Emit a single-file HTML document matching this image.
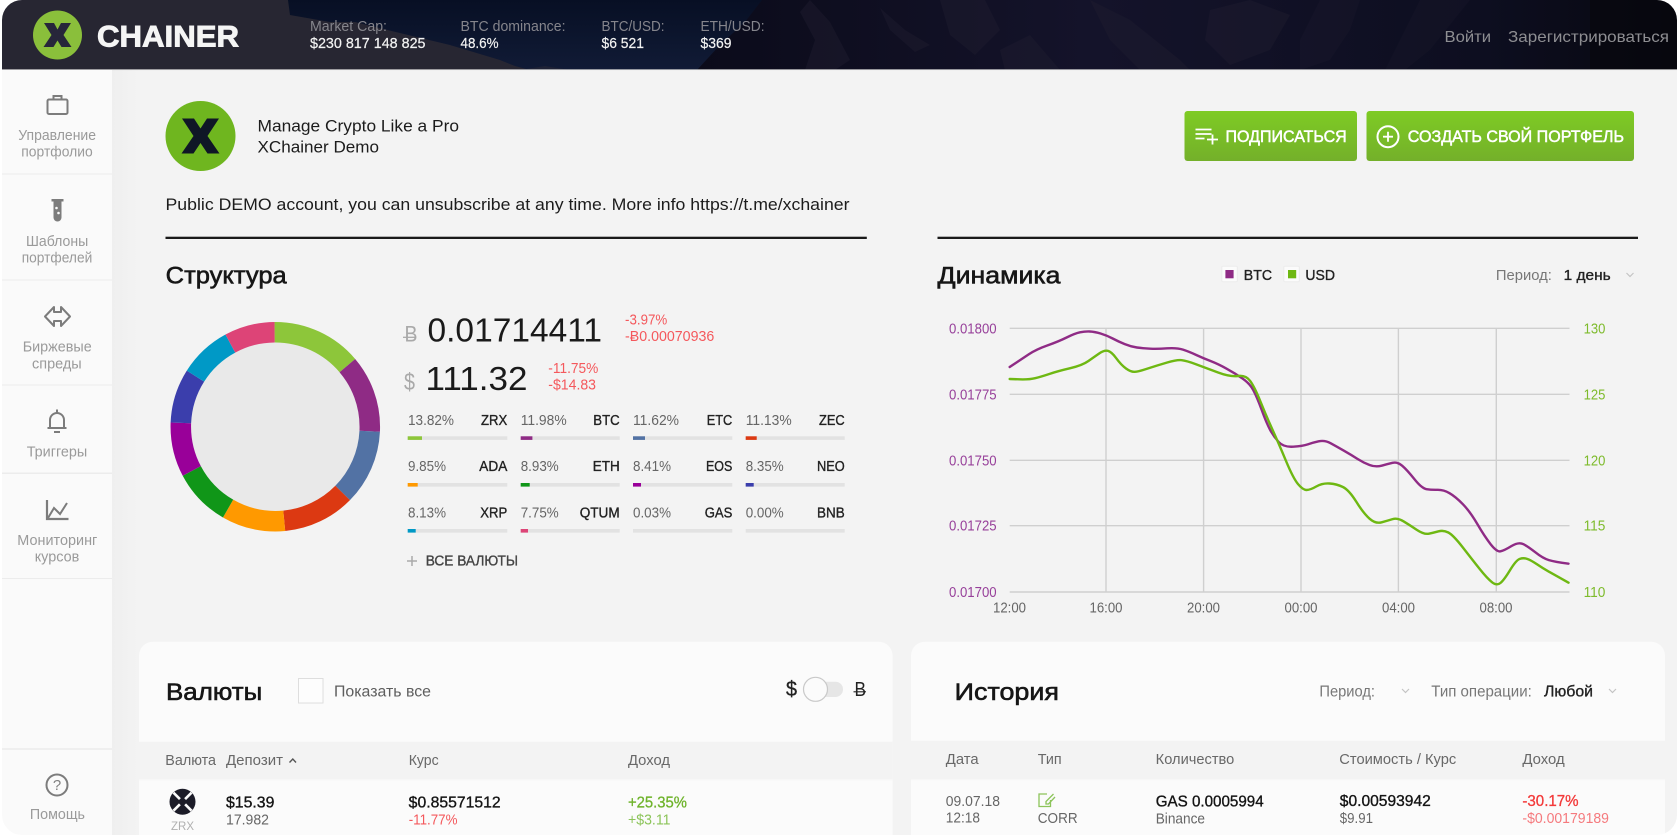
<!DOCTYPE html>
<html lang="ru">
<head>
<meta charset="utf-8">
<title>XChainer Demo</title>
<style>
html,body{margin:0;padding:0;background:#fff;width:1680px;height:835px;overflow:hidden}
svg{display:block}
text{font-family:"Liberation Sans","DejaVu Sans",sans-serif;font-size:14.5px;white-space:pre}
.w{fill:#f2f2f2;stroke:#f2f2f2;stroke-width:.2}
.hl{fill:#85858c}
.nav{fill:#9a9a9a}
.d{fill:#1c1c1c}
.m{fill:#222;stroke:#222;stroke-width:.35}
.g{fill:#777}
.g2{fill:#666}
.r{fill:#f4585c}
.h{font-size:24.5px;fill:#161616;stroke:#161616;stroke-width:.6}
.p{fill:#97409a}
.u{fill:#7ebb2c}
.t{fill:#686868;font-size:14.5px}
</style>
</head>
<body>
<svg width="1680" height="835" viewBox="0 0 1680 835" xmlns="http://www.w3.org/2000/svg">
<defs>
<linearGradient id="btn" x1="0" y1="0" x2="0" y2="1"><stop offset="0" stop-color="#7ecb24"/><stop offset="1" stop-color="#74b02a"/></linearGradient>
<linearGradient id="nv" x1="0" y1="0" x2="0" y2="1"><stop offset="0" stop-color="#070f24"/><stop offset="1" stop-color="#111b36"/></linearGradient>
<linearGradient id="mt" x1="0" y1="0" x2="1" y2="0"><stop offset="0" stop-color="#0b0b1a"/><stop offset=".4" stop-color="#14132a"/><stop offset=".8" stop-color="#0d0e20"/><stop offset="1" stop-color="#08080f"/></linearGradient>
<linearGradient id="sd" x1="0" y1="0" x2="1" y2="0"><stop offset="0" stop-color="#efefef"/><stop offset="1" stop-color="#f3f3f3"/></linearGradient>
</defs>

<!-- page -->
<rect width="1680" height="835" fill="#f3f3f3"/>
<rect x="112" y="70" width="26" height="765" fill="url(#sd)"/>

<!-- header -->
<rect x="0" y="0" width="1680" height="70" fill="url(#nv)"/>
<path d="M0 0H288L290 15L330 22L355 22L400 33L450 45L500 60L515 66L530 70H0Z" fill="#272632"/>
<path d="M520 70L545 66L570 70Z" fill="#1e2236"/>
<path d="M697 70L720 45L745 22L762 0H1680V70Z" fill="url(#mt)"/>
<g fill="#201e30" opacity=".45">
<path d="M810 0L830 22L850 60L835 70L805 70L815 40L800 12Z"/>
<path d="M880 8L905 30L930 45L915 52L890 30Z"/>
<path d="M940 0L985 0L1000 30L975 55L950 35Z"/>
<path d="M1000 50L1030 35L1060 70H1005Z"/>
<path d="M1090 0L1130 20L1180 60L1190 70H1140L1110 40Z"/>
<path d="M1210 10L1250 0L1290 15L1270 50L1230 65L1205 40Z"/>
<path d="M1320 0L1360 0L1350 30L1330 60L1300 70L1300 40Z" opacity=".6"/>
<path d="M1420 0L1470 0L1450 25L1430 50L1405 70L1385 70Z" opacity=".5"/>
</g>
<rect x="1590" y="0" width="90" height="70" fill="#07070e" opacity=".7"/>
<rect x="0" y="69.3" width="1680" height=".8" fill="#d0d0d0"/>

<circle cx="57.5" cy="35" r="24.5" fill="#8abf3b"/>
<path d="M44 23H54L57.5 29.5L61 23H71L63.5 35L71.5 47H61.500L57.5 40.500L53.500 47H43.5L51.500 35Z" fill="#27263a"/>
<text x="97" y="46.7" textLength="142" lengthAdjust="spacingAndGlyphs" style="font-size:30px;font-weight:700;stroke:#f5f5f5;stroke-width:.9" fill="#f5f5f5">CHAINER</text>

<text class="hl" x="310" y="31" textLength="77" lengthAdjust="spacingAndGlyphs">Market Cap:</text>
<text class="w" x="310" y="48" textLength="115.500" lengthAdjust="spacingAndGlyphs">$230 817 148 825</text>
<text class="hl" x="460.500" y="31" textLength="105" lengthAdjust="spacingAndGlyphs">BTC dominance:</text>
<text class="w" x="460.500" y="48" textLength="38" lengthAdjust="spacingAndGlyphs">48.6%</text>
<text class="hl" x="601.500" y="31" textLength="63" lengthAdjust="spacingAndGlyphs">BTC/USD:</text>
<text class="w" x="601.500" y="48" textLength="42.500" lengthAdjust="spacingAndGlyphs">$6 521</text>
<text class="hl" x="700.500" y="31" textLength="64" lengthAdjust="spacingAndGlyphs">ETH/USD:</text>
<text class="w" x="700.500" y="48" textLength="31" lengthAdjust="spacingAndGlyphs">$369</text>
<text x="1444.500" y="42" textLength="46.500" lengthAdjust="spacingAndGlyphs" style="font-size:16px" fill="#8e8e92">Войти</text>
<text x="1508" y="42" textLength="161" lengthAdjust="spacingAndGlyphs" style="font-size:16px" fill="#8e8e92">Зарегистрироваться</text>

<!-- sidebar -->
<rect x="0" y="70" width="112" height="765" fill="#fafafa"/>
<g fill="#ececec">
<rect x="2" y="173.500" width="110" height="1"/>
<rect x="2" y="279.500" width="110" height="1"/>
<rect x="2" y="384.500" width="110" height="1"/>
<rect x="2" y="472.500" width="110" height="1.500"/>
<rect x="2" y="578" width="110" height="1"/>
<rect x="2" y="748.500" width="110" height="1" fill="#e4e4e4"/>
</g>
<g fill="none" stroke="#7c7c7c" stroke-width="2">
<rect x="47.500" y="99.500" width="20" height="14.500" rx="1.500"/>
<path d="M53.500 99V96H61.500V99"/>
<path d="M54 307L45 316.500L54 326V321H61V326L70 316.500L61 307V312H54Z" stroke-linejoin="round"/>
<path d="M50 427V420A7 7 0 0 1 64 420V427M47.500 428H66.500M57 409.500V413M54 432H60"/>
<path d="M47 500V519H68.500" stroke-width="2.200"/>
<path d="M48 518L54 508L60 514L67 503"/>
<circle cx="57" cy="785" r="10.500"/>
</g>
<path d="M51.500 199H63.500V201.500H61.500V217.500A4 4 0 0 1 53.500 217.500V201.500H51.500Z" fill="#7c7c7c"/>
<circle cx="56.500" cy="208" r="1.300" fill="#fafafa"/><circle cx="58.500" cy="213" r="1.300" fill="#fafafa"/>
<text x="57" y="790" text-anchor="middle" style="font-size:15px" fill="#808080">?</text>
<text class="nav" x="18.300" y="140" textLength="77.700" lengthAdjust="spacingAndGlyphs">Управление</text>
<text class="nav" x="21.300" y="156.700" textLength="71.400" lengthAdjust="spacingAndGlyphs">портфолио</text>
<text class="nav" x="26" y="246" textLength="62.300" lengthAdjust="spacingAndGlyphs">Шаблоны</text>
<text class="nav" x="21.700" y="262.700" textLength="70.600" lengthAdjust="spacingAndGlyphs">портфелей</text>
<text class="nav" x="22.700" y="351.700" textLength="69" lengthAdjust="spacingAndGlyphs">Биржевые</text>
<text class="nav" x="32" y="368.300" textLength="49.700" lengthAdjust="spacingAndGlyphs">спреды</text>
<text class="nav" x="26.700" y="456.700" textLength="60.600" lengthAdjust="spacingAndGlyphs">Триггеры</text>
<text class="nav" x="17.300" y="545" textLength="80" lengthAdjust="spacingAndGlyphs">Мониторинг</text>
<text class="nav" x="34.700" y="561.700" textLength="44.600" lengthAdjust="spacingAndGlyphs">курсов</text>
<text class="nav" x="29.900" y="819" textLength="55.100" lengthAdjust="spacingAndGlyphs">Помощь</text>

<!-- profile -->
<circle cx="200.500" cy="136" r="35" fill="#6fb61f"/>
<path d="M182 118.500H194L200.500 128.500L207 118.500H219L207.500 136L219.500 153.500H207.500L200.500 143L193.500 153.500H181.500L193.500 136Z" fill="#0f1626"/>
<text class="d" x="257.500" y="131.500" textLength="201.500" lengthAdjust="spacingAndGlyphs" style="font-size:16.5px">Manage Crypto Like a Pro</text>
<text class="d" x="257.500" y="152.300" textLength="121.500" lengthAdjust="spacingAndGlyphs" style="font-size:16.5px">XChainer Demo</text>
<text class="d" x="165.500" y="210" textLength="684" lengthAdjust="spacingAndGlyphs" style="font-size:16.5px">Public DEMO account, you can unsubscribe at any time. More info https://t.me/xchainer</text>

<rect x="1184.500" y="111" width="172.500" height="50" rx="3" fill="url(#btn)"/>
<rect x="1366.500" y="111" width="267.500" height="50" rx="3" fill="url(#btn)"/>
<g stroke="#fff" stroke-width="1.800" fill="none">
<path d="M1195.500 129.500H1211.500M1195.500 134H1211.500M1195.500 138.500H1204.500M1207 139.500H1218M1212.500 134.500V144.500"/>
<circle cx="1388" cy="136.700" r="10.500" stroke-width="2"/>
<path d="M1383 136.700H1393M1388 131.700V141.700"/>
</g>
<text x="1225.500" y="142" textLength="121.200" lengthAdjust="spacingAndGlyphs" style="font-size:16.5px;stroke:#fff;stroke-width:.5" fill="#fff">ПОДПИСАТЬСЯ</text>
<text x="1407.800" y="142" textLength="216.200" lengthAdjust="spacingAndGlyphs" style="font-size:16.5px;stroke:#fff;stroke-width:.5" fill="#fff">СОЗДАТЬ СВОЙ ПОРТФЕЛЬ</text>

<rect x="165.500" y="236.700" width="701.300" height="2.300" fill="#1a1a1a"/>
<rect x="937.500" y="236.700" width="700.500" height="2.300" fill="#1a1a1a"/>

<!-- structure -->
<text class="h" x="165.700" y="283.300" textLength="121" lengthAdjust="spacingAndGlyphs">Структура</text>
<circle cx="275.300" cy="426.700" r="84.500" fill="#e9e9e9"/>
<g transform="rotate(-90 275.300 426.700)" fill="none" stroke-width="20.500">
<circle cx="275.300" cy="426.700" r="94.500" pathLength="100" stroke="#8dc63a" stroke-dasharray="13.82 86.18" stroke-dashoffset="0"/>
<circle cx="275.300" cy="426.700" r="94.500" pathLength="100" stroke="#8f2b85" stroke-dasharray="11.98 88.02" stroke-dashoffset="-13.82"/>
<circle cx="275.300" cy="426.700" r="94.500" pathLength="100" stroke="#5272a4" stroke-dasharray="11.62 88.38" stroke-dashoffset="-25.80"/>
<circle cx="275.300" cy="426.700" r="94.500" pathLength="100" stroke="#dc3912" stroke-dasharray="11.13 88.87" stroke-dashoffset="-37.42"/>
<circle cx="275.300" cy="426.700" r="94.500" pathLength="100" stroke="#ff9900" stroke-dasharray="9.85 90.15" stroke-dashoffset="-48.55"/>
<circle cx="275.300" cy="426.700" r="94.500" pathLength="100" stroke="#109618" stroke-dasharray="8.93 91.07" stroke-dashoffset="-58.40"/>
<circle cx="275.300" cy="426.700" r="94.500" pathLength="100" stroke="#990099" stroke-dasharray="8.41 91.59" stroke-dashoffset="-67.33"/>
<circle cx="275.300" cy="426.700" r="94.500" pathLength="100" stroke="#3b3eac" stroke-dasharray="8.35 91.65" stroke-dashoffset="-75.74"/>
<circle cx="275.300" cy="426.700" r="94.500" pathLength="100" stroke="#0099c6" stroke-dasharray="8.13 91.87" stroke-dashoffset="-84.09"/>
<circle cx="275.300" cy="426.700" r="94.500" pathLength="100" stroke="#dd4477" stroke-dasharray="7.78 92.22" stroke-dashoffset="-92.22"/>
</g>

<text x="404.500" y="341.700" textLength="13" lengthAdjust="spacingAndGlyphs" style="font-size:22px" fill="#a9a9a9">B</text>
<path d="M403 337.300H416" stroke="#a9a9a9" stroke-width="1.300"/>
<text x="427.500" y="341.700" textLength="174.500" lengthAdjust="spacingAndGlyphs" style="font-size:33px" fill="#1a1a1a">0.01714411</text>
<text class="r" x="625" y="324.300" textLength="42.300" lengthAdjust="spacingAndGlyphs">-3.97%</text>
<text class="r" x="625" y="341" textLength="89.300" lengthAdjust="spacingAndGlyphs">-Ƀ0.00070936</text>
<text x="404" y="390" textLength="11" lengthAdjust="spacingAndGlyphs" style="font-size:24px" fill="#a9a9a9">$</text>
<text x="425.500" y="390" textLength="102" lengthAdjust="spacingAndGlyphs" style="font-size:33px" fill="#1a1a1a">111.32</text>
<text class="r" x="548.300" y="373" textLength="50" lengthAdjust="spacingAndGlyphs">-11.75%</text>
<text class="r" x="548.300" y="389.700" textLength="47.700" lengthAdjust="spacingAndGlyphs">-$14.83</text>

<!-- bars -->
<g fill="#e2e2e2">
<rect x="407.700" y="436.300" width="99.600" height="3.600"/><rect x="520.700" y="436.300" width="99" height="3.600"/><rect x="633" y="436.300" width="99.300" height="3.600"/><rect x="745.700" y="436.300" width="99" height="3.600"/>
<rect x="407.700" y="483" width="99.600" height="3.600"/><rect x="520.700" y="483" width="99" height="3.600"/><rect x="633" y="483" width="99.300" height="3.600"/><rect x="745.700" y="483" width="99" height="3.600"/>
<rect x="407.700" y="529" width="99.600" height="3.600"/><rect x="520.700" y="529" width="99" height="3.600"/><rect x="633" y="529" width="99.300" height="3.600"/><rect x="745.700" y="529" width="99" height="3.600"/>
</g>
<rect x="407.700" y="436.300" width="14.300" height="3.600" fill="#8dc63a"/>
<rect x="520.700" y="436.300" width="11.700" height="3.600" fill="#8f2b85"/>
<rect x="633" y="436.300" width="12" height="3.600" fill="#5272a4"/>
<rect x="745.700" y="436.300" width="11" height="3.600" fill="#dc3912"/>
<rect x="407.700" y="483" width="10" height="3.600" fill="#ff9900"/>
<rect x="520.700" y="483" width="9" height="3.600" fill="#109618"/>
<rect x="633" y="483" width="8" height="3.600" fill="#990099"/>
<rect x="745.700" y="483" width="8" height="3.600" fill="#3b3eac"/>
<rect x="407.700" y="529" width="8" height="3.600" fill="#0099c6"/>
<rect x="520.700" y="529" width="7.300" height="3.600" fill="#dd4477"/>

<g>
<text class="g2" x="408" y="425" textLength="46" lengthAdjust="spacingAndGlyphs">13.82%</text>
<text class="m" x="481" y="425" textLength="26.300" lengthAdjust="spacingAndGlyphs">ZRX</text>
<text class="g2" x="520.700" y="425" textLength="46" lengthAdjust="spacingAndGlyphs">11.98%</text>
<text class="m" x="593.300" y="425" textLength="26.400" lengthAdjust="spacingAndGlyphs">BTC</text>
<text class="g2" x="633" y="425" textLength="46" lengthAdjust="spacingAndGlyphs">11.62%</text>
<text class="m" x="706.700" y="425" textLength="25.600" lengthAdjust="spacingAndGlyphs">ETC</text>
<text class="g2" x="745.700" y="425" textLength="46" lengthAdjust="spacingAndGlyphs">11.13%</text>
<text class="m" x="819" y="425" textLength="25.700" lengthAdjust="spacingAndGlyphs">ZEC</text>

<text class="g2" x="408" y="471" textLength="38" lengthAdjust="spacingAndGlyphs">9.85%</text>
<text class="m" x="479.300" y="471" textLength="28" lengthAdjust="spacingAndGlyphs">ADA</text>
<text class="g2" x="520.700" y="471" textLength="38" lengthAdjust="spacingAndGlyphs">8.93%</text>
<text class="m" x="592.700" y="471" textLength="27" lengthAdjust="spacingAndGlyphs">ETH</text>
<text class="g2" x="633" y="471" textLength="38" lengthAdjust="spacingAndGlyphs">8.41%</text>
<text class="m" x="706" y="471" textLength="26.300" lengthAdjust="spacingAndGlyphs">EOS</text>
<text class="g2" x="745.700" y="471" textLength="38" lengthAdjust="spacingAndGlyphs">8.35%</text>
<text class="m" x="817" y="471" textLength="27.700" lengthAdjust="spacingAndGlyphs">NEO</text>

<text class="g2" x="408" y="517.700" textLength="38" lengthAdjust="spacingAndGlyphs">8.13%</text>
<text class="m" x="480.300" y="517.700" textLength="27" lengthAdjust="spacingAndGlyphs">XRP</text>
<text class="g2" x="520.700" y="517.700" textLength="38" lengthAdjust="spacingAndGlyphs">7.75%</text>
<text class="m" x="579.700" y="517.700" textLength="40" lengthAdjust="spacingAndGlyphs">QTUM</text>
<text class="g2" x="633" y="517.700" textLength="38" lengthAdjust="spacingAndGlyphs">0.03%</text>
<text class="m" x="704.700" y="517.700" textLength="27.600" lengthAdjust="spacingAndGlyphs">GAS</text>
<text class="g2" x="745.700" y="517.700" textLength="38" lengthAdjust="spacingAndGlyphs">0.00%</text>
<text class="m" x="817" y="517.700" textLength="27.700" lengthAdjust="spacingAndGlyphs">BNB</text>
</g>
<path d="M407 561H417M412 556V566" stroke="#aaa" stroke-width="1.500" fill="none"/>
<text x="425.700" y="565.700" textLength="92.300" lengthAdjust="spacingAndGlyphs" style="stroke:#444;stroke-width:.35" fill="#444">ВСЕ ВАЛЮТЫ</text>

<!-- dynamics -->
<text class="h" x="937.500" y="283.300" textLength="123" lengthAdjust="spacingAndGlyphs">Динамика</text>
<rect x="1221.800" y="266.300" width="15.500" height="15.500" rx="1" fill="#fbfbfb" stroke="#ececec"/>
<rect x="1225.400" y="270" width="8.200" height="8.300" fill="#8f2b85"/>
<text class="m" x="1243.800" y="280" textLength="28.200" lengthAdjust="spacingAndGlyphs">BTC</text>
<rect x="1283.800" y="266.300" width="15.500" height="15.500" rx="1" fill="#fbfbfb" stroke="#ececec"/>
<rect x="1288" y="270" width="8.200" height="8.300" fill="#6eb812"/>
<text class="m" x="1305.400" y="280" textLength="29.600" lengthAdjust="spacingAndGlyphs">USD</text>
<text class="g" x="1495.900" y="280" textLength="56" lengthAdjust="spacingAndGlyphs">Период:</text>
<text class="m" x="1563.700" y="280" textLength="47" lengthAdjust="spacingAndGlyphs">1 день</text>
<path d="M1626.500 273L1630 276.500L1633.500 273" fill="none" stroke="#c4c4c4" stroke-width="1.200"/>

<g stroke="#cfcfcf" stroke-width="1.400" fill="none">
<path d="M1009.700 328.300H1569.500M1009.700 394.300H1569.500M1009.700 460.300H1569.500M1009.700 525.700H1569.500M1009.700 592H1569.500"/>
<path d="M1106 328.300V592M1203.600 328.300V592M1301 328.300V592M1398.400 328.300V592M1496.300 328.300V592"/>
</g>
<g transform="translate(920 240) scale(.4847 .33333)" fill="none" stroke-width="2.400" stroke-linecap="round" stroke-linejoin="round">
<path vector-effect="non-scaling-stroke" stroke="#8f2b85" d="M185 381L197.500 369Q210 357 225 342.500Q240 328 262.500 316.500Q285 305 302.500 292.500Q320 280 330 277Q340 274 350 274.500Q360 275 372.500 280.500Q385 286 397.500 295.500Q410 305 422.500 312.500Q435 320 447.500 322.500Q460 325 475 326Q490 327 510 325Q530 323 542.500 329Q555 335 570 345Q585 355 600 363.500Q615 372 632.500 386Q650 400 665 415Q680 430 687.500 450Q695 470 705 510Q715 550 722.500 570Q730 590 740 606Q750 622 770 620Q790 618 800 613Q810 608 822.500 604Q835 600 847.500 610Q860 620 875 632.500Q890 645 902.500 656.500Q915 668 927.500 675Q940 682 952.500 677Q965 672 975 668.500Q985 665 995 677.500Q1005 690 1020 717.500Q1035 745 1045 747.500Q1055 750 1067.500 749.500Q1080 749 1092.500 759.500Q1105 770 1120 792.500Q1135 815 1150 852.500Q1165 890 1177.500 913Q1190 936 1197.500 934Q1205 932 1220 918.500Q1235 905 1245 912.500Q1255 920 1270 937.500Q1285 955 1297.500 960.500Q1310 966 1338 971"/>
<path vector-effect="non-scaling-stroke" stroke="#6eb812" d="M185 417L205 418Q225 419 237.500 414.500Q250 410 267.500 401.500Q285 393 310 384.500Q335 376 347.500 363Q360 350 370 340Q380 330 387.500 332.500Q395 335 405 355Q415 375 425 385.500Q435 396 442.500 395.500Q450 395 470 385.500Q490 376 510 367.500Q530 359 540 360.500Q550 362 570 373Q590 384 615 397.500Q640 411 656 408Q672 405 681 422.500Q690 440 702.500 485Q715 530 727.500 570Q740 610 755 662.500Q770 715 780 732.500Q790 750 797.500 750Q805 750 817.500 739.500Q830 729 845 730.500Q860 732 872.500 741Q885 750 900 785Q915 820 927.500 836Q940 852 952.500 847Q965 842 975 837.500Q985 833 997.500 844Q1010 855 1025 869.500Q1040 884 1050 881Q1060 878 1070 874Q1080 870 1090 877.500Q1100 885 1120 922.500Q1140 960 1155 987.500Q1170 1015 1180 1026.500Q1190 1038 1197.500 1029Q1205 1020 1217.500 990Q1230 960 1237.500 956.500Q1245 953 1252.500 956.500Q1260 960 1272.500 972.500Q1285 985 1297.500 995Q1310 1005 1338 1028"/>
</g>
<text class="p" x="949" y="333.300" textLength="47.600" lengthAdjust="spacingAndGlyphs">0.01800</text>
<text class="p" x="949" y="399.300" textLength="47.600" lengthAdjust="spacingAndGlyphs">0.01775</text>
<text class="p" x="949" y="465.300" textLength="47.600" lengthAdjust="spacingAndGlyphs">0.01750</text>
<text class="p" x="949" y="530.700" textLength="47.600" lengthAdjust="spacingAndGlyphs">0.01725</text>
<text class="p" x="949" y="597" textLength="47.600" lengthAdjust="spacingAndGlyphs">0.01700</text>
<text class="u" x="1583.600" y="333.300" textLength="21.800" lengthAdjust="spacingAndGlyphs">130</text>
<text class="u" x="1583.600" y="399.300" textLength="21.800" lengthAdjust="spacingAndGlyphs">125</text>
<text class="u" x="1583.600" y="465.300" textLength="21.800" lengthAdjust="spacingAndGlyphs">120</text>
<text class="u" x="1583.600" y="530.700" textLength="21.800" lengthAdjust="spacingAndGlyphs">115</text>
<text class="u" x="1583.600" y="597" textLength="21.800" lengthAdjust="spacingAndGlyphs">110</text>
<text class="g2" x="993" y="612.700" textLength="33" lengthAdjust="spacingAndGlyphs">12:00</text>
<text class="g2" x="1089.500" y="612.700" textLength="33" lengthAdjust="spacingAndGlyphs">16:00</text>
<text class="g2" x="1187" y="612.700" textLength="33" lengthAdjust="spacingAndGlyphs">20:00</text>
<text class="g2" x="1284.500" y="612.700" textLength="33" lengthAdjust="spacingAndGlyphs">00:00</text>
<text class="g2" x="1382" y="612.700" textLength="33" lengthAdjust="spacingAndGlyphs">04:00</text>
<text class="g2" x="1479.500" y="612.700" textLength="33" lengthAdjust="spacingAndGlyphs">08:00</text>

<!-- currencies card -->
<path d="M139 835V655.700A14 14 0 0 1 153 641.700H878.600A14 14 0 0 1 892.600 655.700V835Z" fill="#fbfbfb"/>
<rect x="139" y="741.700" width="753.600" height="37.500" fill="#f3f3f3"/>
<rect x="139" y="779.200" width="753.600" height="1.300" fill="#f7f7f7"/>
<text class="h" x="166" y="700" textLength="96.300" lengthAdjust="spacingAndGlyphs">Валюты</text>
<rect x="298.500" y="678.500" width="24.500" height="24.500" fill="#fdfdfd" stroke="#dedede"/>
<text x="334" y="696.300" textLength="97" lengthAdjust="spacingAndGlyphs" style="font-size:15.5px" fill="#5e5e5e">Показать все</text>
<text x="786" y="696" textLength="11" lengthAdjust="spacingAndGlyphs" style="font-size:21px;stroke:#222;stroke-width:.3" fill="#222">$</text>
<rect x="804" y="681.700" width="39" height="15.300" rx="7.600" fill="#e6e6e6"/>
<circle cx="815.500" cy="689.300" r="12" fill="#fbfbfb" stroke="#c9c9c9" stroke-width="1.200"/>
<text x="854.500" y="696" textLength="11.500" lengthAdjust="spacingAndGlyphs" style="font-size:20px" fill="#222">B</text>
<path d="M853.500 691.800H866" stroke="#222" stroke-width="1.100"/>
<text class="t" x="165.300" y="765" textLength="50.700" lengthAdjust="spacingAndGlyphs">Валюта</text>
<text class="t" x="226" y="765" textLength="57" lengthAdjust="spacingAndGlyphs">Депозит</text>
<path d="M289.500 762.500L292.800 759L296 762.500" fill="none" stroke="#555" stroke-width="1.400"/>
<text class="t" x="408.700" y="765" textLength="30" lengthAdjust="spacingAndGlyphs">Курс</text>
<text class="t" x="628" y="765" textLength="42" lengthAdjust="spacingAndGlyphs">Доход</text>
<circle cx="182.500" cy="801.700" r="13" fill="#1c1c28"/>
<path d="M173.500 792.700L191.500 810.700M191.500 792.700L173.500 810.700" stroke="#fbfbfb" stroke-width="2.600"/>
<path d="M182.500 796.500L187.700 801.700L182.500 806.900L177.300 801.700Z" fill="#1c1c28"/>
<text x="171" y="830" textLength="23" lengthAdjust="spacingAndGlyphs" style="font-size:12px" fill="#b0b0b0">ZRX</text>
<text x="226" y="807.700" textLength="48.400" lengthAdjust="spacingAndGlyphs" style="font-size:15.5px;stroke:#141414;stroke-width:.35" fill="#141414">$15.39</text>
<text class="g2" x="226" y="824.300" textLength="43" lengthAdjust="spacingAndGlyphs">17.982</text>
<text x="408.700" y="807.700" textLength="91.900" lengthAdjust="spacingAndGlyphs" style="font-size:15.5px;stroke:#141414;stroke-width:.35" fill="#141414">$0.85571512</text>
<text class="r" x="408.700" y="824.300" textLength="48.800" lengthAdjust="spacingAndGlyphs">-11.77%</text>
<text x="628" y="807.700" textLength="59" lengthAdjust="spacingAndGlyphs" style="font-size:15.5px;stroke:#6eb32a;stroke-width:.3" fill="#6eb32a">+25.35%</text>
<text x="628" y="824.300" textLength="42.500" lengthAdjust="spacingAndGlyphs" fill="#8cc45a">+$3.11</text>

<!-- history card -->
<path d="M911 835V655.700A14 14 0 0 1 925 641.700H1651A14 14 0 0 1 1665 655.700V835Z" fill="#fbfbfb"/>
<rect x="911" y="740.700" width="754" height="38.300" fill="#f3f3f3"/>
<rect x="911" y="779" width="754" height="1.300" fill="#f7f7f7"/>
<text class="h" x="954.700" y="700" textLength="104.300" lengthAdjust="spacingAndGlyphs">История</text>
<text class="g" x="1319.400" y="696.300" textLength="55.600" lengthAdjust="spacingAndGlyphs" style="font-size:15.5px">Период:</text>
<path d="M1402 689L1405.500 692.500L1409 689" fill="none" stroke="#c4c4c4" stroke-width="1.200"/>
<text class="g" x="1431.300" y="696.300" textLength="100.500" lengthAdjust="spacingAndGlyphs" style="font-size:15.5px">Тип операции:</text>
<text class="m" x="1544" y="696.300" textLength="49" lengthAdjust="spacingAndGlyphs" style="font-size:15.5px">Любой</text>
<path d="M1609 689L1612.500 692.500L1616 689" fill="none" stroke="#c4c4c4" stroke-width="1.200"/>
<text class="t" x="945.800" y="764" textLength="32.800" lengthAdjust="spacingAndGlyphs">Дата</text>
<text class="t" x="1037.800" y="764" textLength="23.900" lengthAdjust="spacingAndGlyphs">Тип</text>
<text class="t" x="1155.700" y="764" textLength="78.600" lengthAdjust="spacingAndGlyphs">Количество</text>
<text class="t" x="1339.300" y="764" textLength="116.900" lengthAdjust="spacingAndGlyphs">Стоимость / Курс</text>
<text class="t" x="1522.400" y="764" textLength="42.300" lengthAdjust="spacingAndGlyphs">Доход</text>
<text class="g2" x="945.800" y="806" textLength="54.200" lengthAdjust="spacingAndGlyphs">09.07.18</text>
<text class="g2" x="945.800" y="822.700" textLength="34.200" lengthAdjust="spacingAndGlyphs">12:18</text>
<path d="M1047 794H1039V806.500H1050.500V800M1053.500 794L1046 801.500V804H1048.500L1055 797" fill="none" stroke="#8cc45a" stroke-width="1.300"/>
<text class="g2" x="1037.800" y="823" textLength="39.800" lengthAdjust="spacingAndGlyphs">CORR</text>
<text x="1155.700" y="806.700" textLength="108" lengthAdjust="spacingAndGlyphs" style="font-size:15.5px;stroke:#141414;stroke-width:.35" fill="#141414">GAS 0.0005994</text>
<text class="g2" x="1155.700" y="823.300" textLength="49.300" lengthAdjust="spacingAndGlyphs">Binance</text>
<text x="1339.800" y="806" textLength="91" lengthAdjust="spacingAndGlyphs" style="font-size:15.5px;stroke:#141414;stroke-width:.35" fill="#141414">$0.00593942</text>
<text class="g2" x="1339.800" y="823" textLength="33.200" lengthAdjust="spacingAndGlyphs">$9.91</text>
<text x="1522.400" y="806" textLength="56.200" lengthAdjust="spacingAndGlyphs" style="font-size:15.5px;stroke:#f33a3a;stroke-width:.3" fill="#f33a3a">-30.17%</text>
<text x="1522.400" y="823" textLength="86.600" lengthAdjust="spacingAndGlyphs" fill="#f57a7e">-$0.00179189</text>

<!-- window corners -->
<path fill-rule="evenodd" fill="#fff" d="M0 0H1680V835H0ZM22 0A20 20 0 0 0 2 20V815A20 20 0 0 0 22 835H1657A20 20 0 0 0 1677 815V20A20 20 0 0 0 1657 0Z"/>
</svg>
</body>
</html>
